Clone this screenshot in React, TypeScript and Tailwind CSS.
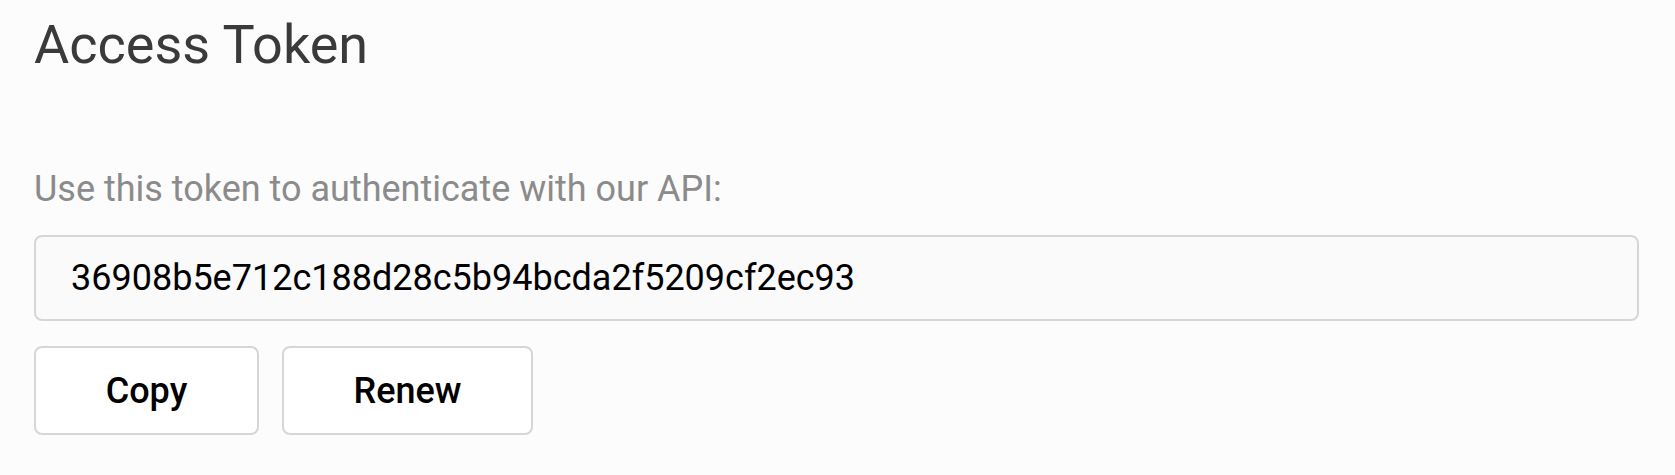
import { useState } from 'react';

const initialToken = '36908b5e712c188d28c5b94bcda2f5209cf2ec93';

export default function App() {
  const [token] = useState(initialToken);

  return (
    <div className="min-h-[475px] w-full bg-[#fcfcfc] pl-[34px] pr-[36px] pt-[18px] font-['Roboto',sans-serif]">
      <h1 className="text-[54px] leading-none font-normal text-[#3a3a3a]">Access Token</h1>

      <p className="mt-[99px] text-[36px] leading-none text-[#8b8b8b]">
        Use this token to authenticate with our API:
      </p>

      <input
        readOnly
        value={token}
        className="mt-[28px] block h-[86px] w-full rounded-[8px] border-2 border-[#d6d6d6] bg-[#fafafa] pl-[35px] text-[36px] leading-none text-black outline-none"
      />

      <div className="mt-[25px] flex gap-[23px]">
        <button className="h-[89px] w-[225px] rounded-[8px] border-2 border-[#d6d6d6] bg-white text-[36px] font-medium text-black">
          Copy
        </button>
        <button className="h-[89px] w-[251px] rounded-[8px] border-2 border-[#d6d6d6] bg-white text-[36px] font-medium text-black">
          Renew
        </button>
      </div>
    </div>
  );
}
